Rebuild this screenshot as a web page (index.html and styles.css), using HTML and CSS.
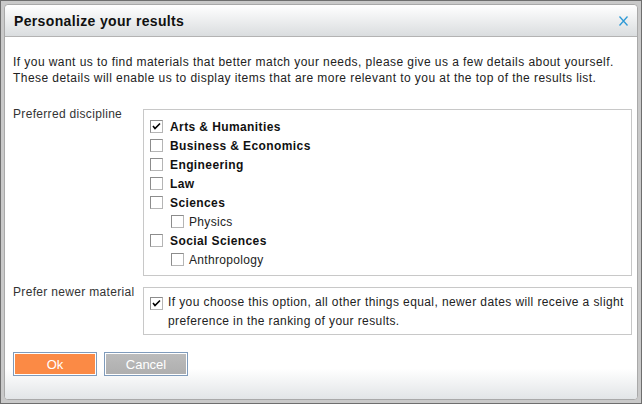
FILE: index.html
```
<!DOCTYPE html>
<html>
<head>
<meta charset="utf-8">
<link rel="stylesheet" href="styles.css">
</head>
<body>
<div class="frame">
  <div class="dialog">
    <div class="header">
      <span class="title">Personalize your results</span>
      <svg class="close" viewBox="0 0 9 10" width="9" height="10"><path d="M0.5 0.5 L8.5 9.5 M8.5 0.5 L0.5 9.5" stroke="#2f9ad6" stroke-width="1.3" fill="none"/></svg>
    </div>
    <div class="content">
      <p class="intro">If you want us to find materials that better match your needs, please give us a few details about yourself.<br>These details will enable us to display items that are more relevant to you at the top of the results list.</p>
      <div class="row">
        <div class="label">Preferred discipline</div>
        <div class="box list">
          <div class="item main"><span class="cb checked"><svg viewBox="0 0 11 11"><path d="M2 5 L4 7.5 L9 2.5" fill="none" stroke="#000" stroke-width="1.6"/></svg></span>Arts &amp; Humanities</div>
          <div class="item main"><span class="cb"></span>Business &amp; Economics</div>
          <div class="item main"><span class="cb"></span>Engineering</div>
          <div class="item main"><span class="cb"></span>Law</div>
          <div class="item main"><span class="cb"></span>Sciences</div>
          <div class="item sub"><span class="cb"></span>Physics</div>
          <div class="item main"><span class="cb"></span>Social Sciences</div>
          <div class="item sub"><span class="cb"></span>Anthropology</div>
        </div>
      </div>
      <div class="row row2">
        <div class="label">Prefer newer material</div>
        <div class="box newer">
          <span class="cb checked"><svg viewBox="0 0 11 11"><path d="M2 5 L4 7.5 L9 2.5" fill="none" stroke="#000" stroke-width="1.6"/></svg></span>
          <div class="newer-text">If you choose this option, all other things equal, newer dates will receive a slight<br>preference in the ranking of your results.</div>
        </div>
      </div>
    </div>
    <div class="footer">
      <button class="btn ok">Ok</button>
      <button class="btn cancel">Cancel</button>
    </div>
  </div>
</div>
</body>
</html>
```
FILE: styles.css
```
* { box-sizing: border-box; }
html, body { margin: 0; padding: 0; }
body {
  width: 642px;
  height: 404px;
  font-family: "Liberation Sans", Arial, sans-serif;
  font-size: 12px;
  color: #222;
}
.frame {
  width: 642px;
  height: 404px;
  border: 1px solid #6e6e6e;
  background: #c9c9c9;
  padding: 3px;
}
.dialog {
  height: 100%;
  border: 1px solid #a9a9a9;
  border-radius: 4px;
  background: #fff;
  display: flex;
  flex-direction: column;
  overflow: hidden;
}
.header {
  height: 32px;
  flex: none;
  border-bottom: 1px solid #b3b3b3;
  background: linear-gradient(#ffffff, #dadddf);
  display: flex;
  align-items: center;
  justify-content: space-between;
  padding: 0 9px 0 9px;
  border-radius: 4px 4px 0 0;
}
.title {
  font-weight: bold;
  font-size: 14px;
  color: #111;
  letter-spacing: 0.35px;
}
.close {
  margin-top: 1px;
}
.content {
  flex: 1;
  padding: 0 5px 0 8px;
  letter-spacing: 0.32px;
}
.intro {
  margin: 17px 0 0 0;
  line-height: 16px;
  color: #222;
  white-space: nowrap;
  letter-spacing: 0.44px;
}
.row {
  display: flex;
  margin-top: 23px;
}
.row2 { margin-top: 11px; }
.label {
  width: 130px;
  flex: none;
  line-height: 16px;
  margin-top: -3px;
  color: #333;
}
.box {
  flex: 1;
  border: 1px solid #c8c8c8;
}
.list {
  padding: 7px 6px 6px 6px;
}
.item {
  height: 19px;
  display: flex;
  align-items: center;
}
.item.main {
  font-weight: bold;
  color: #111;
  letter-spacing: 0.4px;
}
.item.sub {
  padding-left: 21px;
  color: #222;
}
.cb {
  width: 13px;
  height: 13px;
  flex: none;
  border: 1px solid #8c8c8c;
  border-right-color: #b5b5b5;
  border-bottom-color: #b5b5b5;
  background: #fff;
  margin-right: 7px;
  display: inline-flex;
}
.item.sub .cb { margin-right: 5px; }
.cb svg { width: 11px; height: 11px; }
.newer {
  display: flex;
  align-items: flex-start;
  padding: 5px 2px 3px 6px;
}
.newer .cb { margin-top: 4px; margin-right: 5px; }
.newer-text {
  line-height: 19px;
  color: #222;
  white-space: nowrap;
  letter-spacing: 0.4px;
}
.footer {
  flex: none;
  height: 55px;
  padding: 8px 8px 0 8px;
  display: flex;
  gap: 7px;
  align-items: flex-start;
  background: linear-gradient(#ffffff 0%, #ffffff 45%, #e2e5e7 100%);
}
.btn {
  width: 84px;
  height: 24px;
  border: 1px solid #7f9bbb;
  box-shadow: inset 0 0 0 1px #fff;
  color: #fff;
  font-family: "Liberation Sans", Arial, sans-serif;
  font-size: 13px;
  padding: 0;
}
.ok { background: #fb8a45; }
.cancel { background: linear-gradient(#bcbcbc, #aeaeae); }
```
